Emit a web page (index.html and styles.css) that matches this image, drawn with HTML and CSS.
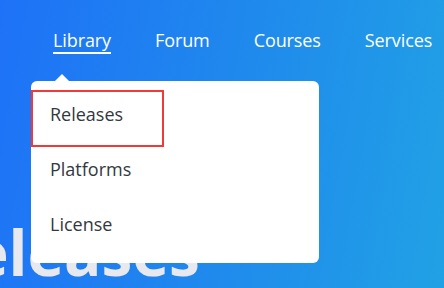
FILE: index.html
```html
<!DOCTYPE html>
<html lang="en">
<head>
  <meta charset="UTF-8">
  <meta name="viewport" content="width=device-width, initial-scale=1.0">
  <title>Releases</title>
  <link rel="stylesheet" href="styles.css">
</head>
<body>
  <nav class="topnav">
    <div class="nav-item">
      <a href="#" class="nav-link current">Library</a>
      <div class="dropdown">
        <a href="#" class="drop-link marked">Releases</a>
        <a href="#" class="drop-link">Platforms</a>
        <a href="#" class="drop-link">License</a>
      </div>
    </div>
    <div class="nav-item"><a href="#" class="nav-link">Forum</a></div>
    <div class="nav-item"><a href="#" class="nav-link">Courses</a></div>
    <div class="nav-item"><a href="#" class="nav-link">Services</a></div>
  </nav>

  <section class="hero">
    <h1>Releases</h1>
  </section>
</body>
</html>
```

FILE: styles.css
```css
* {
  box-sizing: border-box;
}
html, body {
  height: 100%;
}
body {
  margin: 0;
  font-family: 'Open Sans', 'Noto Sans', sans-serif;
  background: linear-gradient(100deg, #1e72f7 0%, #1f86ee 45%, #21a1e5 100%);
  color: #fff;
  overflow: hidden;
}
.topnav {
  display: flex;
  gap: 44px;
  padding: 28px 0 0 53px;
}
.nav-item {
  position: relative;
}
.nav-link {
  display: block;
  color: #fff;
  text-decoration: none;
  font-size: 18px;
  line-height: 24px;
  letter-spacing: -0.1px;
  border-bottom: 2px solid transparent;
}
.nav-link.current {
  border-bottom-color: #fff;
}
.dropdown {
  position: absolute;
  top: 53px;
  left: -22px;
  width: 288px;
  padding: 9px 0 6px;
  background: #fff;
  border-radius: 6px;
  z-index: 2;
}
.dropdown::before {
  content: '';
  position: absolute;
  top: -7px;
  left: 24px;
  border-left: 7px solid transparent;
  border-right: 7px solid transparent;
  border-bottom: 7px solid #fff;
}
.drop-link {
  display: block;
  padding: 0 0 10px 19px;
  line-height: 45px;
  font-size: 18px;
  color: #333840;
  text-decoration: none;
}
.drop-link.marked {
  width: 133px;
  padding: 0 0 8px 17px;
  border: 2px solid #f03a3a;
}
.hero {
  padding-top: 167px;
}
.hero h1 {
  margin: 0 0 0 -69px;
  font-size: 62px;
  line-height: 1;
  font-weight: 700;
  color: #e7e9ef;
  white-space: nowrap;
}
```
